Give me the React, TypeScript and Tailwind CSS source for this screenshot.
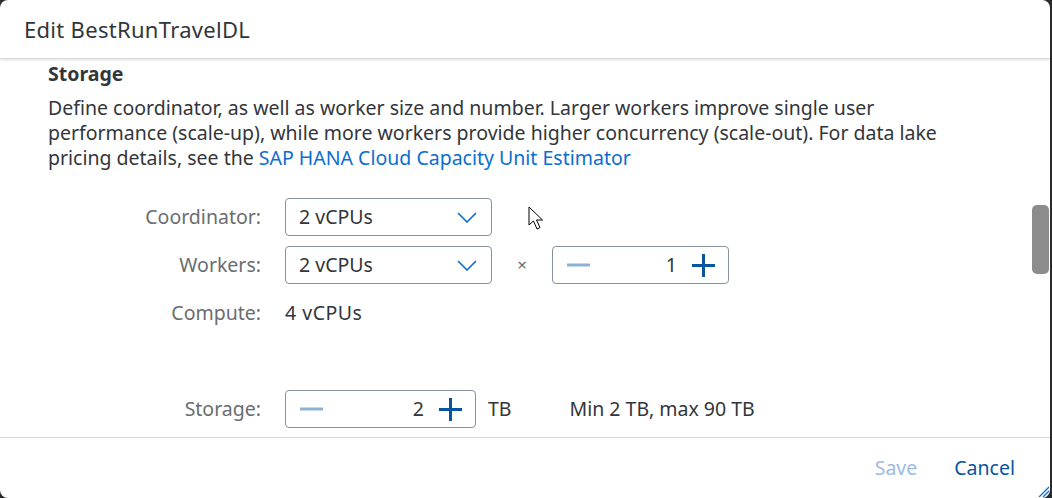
const font = { fontFamily: "'Noto Sans', 'Open Sans', Arial, sans-serif" };

function Chevron() {
  return (
    <svg width="20" height="11" viewBox="0 0 20 11" className="text-[#0a6ed1]">
      <path d="M1 1 L10 10 L19 1" fill="none" stroke="currentColor" strokeWidth="1.6" />
    </svg>
  );
}

function Select({ value }: { value: string }) {
  return (
    <div className="flex h-[38px] w-[207px] items-center justify-between rounded-[4px] border border-[#89919a] bg-white pl-[13px] pr-[14px] text-[19.5px] text-[#32363a]">
      <span>{value}</span>
      <Chevron />
    </div>
  );
}

function Step({ value, width }: { value: string; width: string }) {
  return (
    <div className={`flex h-[38px] items-center rounded-[4px] border border-[#89919a] bg-white pl-[14px] pr-[13px] text-[19.5px] text-[#32363a] ${width}`}>
      <svg width="23" height="22" viewBox="0 0 23 22">
        <path d="M0 11 H23" stroke="#8fb0d6" strokeWidth="3" />
      </svg>
      <span className="flex-1 pr-[15px] text-right">{value}</span>
      <svg width="23" height="23" viewBox="0 0 23 23">
        <path d="M0 11.5 H23 M11.5 0 V23" stroke="#0854a0" strokeWidth="3" />
      </svg>
    </div>
  );
}

function Label({ children }: { children: string }) {
  return <div className="w-[213px] text-right text-[19.5px] leading-[26px] text-[#6a6d70]">{children}</div>;
}

export default function App() {
  return (
    <div className="h-[498px] w-[1052px] overflow-hidden bg-[#2a2a2a]" style={font}>
      <div className="relative flex h-full w-[1050px] flex-col overflow-hidden rounded-[8px] bg-white">
        <header className="flex h-[59px] shrink-0 items-center border-b border-[#d9d9d9] px-[24px] text-[22px] tracking-[0.3px] text-[#32363a] shadow-[0_1px_3px_rgba(0,0,0,0.12)]">
          Edit BestRunTravelDL
        </header>

        <div className="flex min-h-0 flex-1">
          <div className="flex-1 pl-[48px] pt-[3px] text-[#32363a]">
            <h2 className="text-[19.5px] font-bold leading-[24px]">Storage</h2>
            <p className="mt-[9px] w-[912px] text-[19.5px] leading-[25px]">
              Define coordinator, as well as worker size and number. Larger workers improve single user performance
              (scale-up), while more workers provide higher concurrency (scale-out). For data lake pricing details,
              see the <span className="text-[#0a6ed1]">SAP HANA Cloud Capacity Unit Estimator</span>
            </p>

            <div className="mt-[28px] flex flex-col gap-[10px]">
              <div className="flex items-center gap-[24px]">
                <Label>Coordinator:</Label>
                <Select value="2 vCPUs" />
              </div>
              <div className="flex items-center gap-[24px]">
                <Label>Workers:</Label>
                <div className="flex items-center">
                  <Select value="2 vCPUs" />
                  <span className="w-[60px] text-center text-[17px] text-[#6a6d70]">×</span>
                  <Step value="1" width="w-[177px]" />
                </div>
              </div>
              <div className="flex h-[38px] items-center gap-[24px]">
                <Label>Compute:</Label>
                <span className="text-[19.5px] tracking-[0.5px]">4 vCPUs</span>
              </div>
              <div className="mt-[48px] flex items-center gap-[24px]">
                <Label>Storage:</Label>
                <div className="flex items-center">
                  <Step value="2" width="w-[191px]" />
                  <span className="ml-[12px] text-[19.5px]">TB</span>
                  <span className="ml-[58px] text-[19.5px]">Min 2 TB, max 90 TB</span>
                </div>
              </div>
            </div>
          </div>
          <div className="relative w-[18px] shrink-0">
            <div className="absolute left-[0px] top-[146px] h-[69px] w-[17px] rounded-[5px] bg-[#8c8c8c]" />
          </div>
        </div>

        <footer className="flex h-[61px] shrink-0 items-center justify-end gap-[37px] border-t border-[#d9d9d9] pr-[35px] text-[19.5px]">
          <span className="text-[#9bbbe0]">Save</span>
          <span className="text-[#0854a0]">Cancel</span>
        </footer>

        <svg className="absolute bottom-[1px] right-[1px]" width="12" height="12" viewBox="0 0 12 12">
          <path d="M12 2 L2 12 M12 6 L6 12 M12 10 L10 12" stroke="#0a6ed1" strokeWidth="1.3" />
        </svg>

        <svg className="absolute left-[528px] top-[206px]" width="18" height="27" viewBox="0 0 18 27">
          <path d="M1 1 L1 19 L5.5 15 L9 23 L12 21.5 L8.5 14 L14.5 14 Z" fill="white" stroke="black" strokeWidth="1" strokeLinejoin="round" />
        </svg>
      </div>
    </div>
  );
}
